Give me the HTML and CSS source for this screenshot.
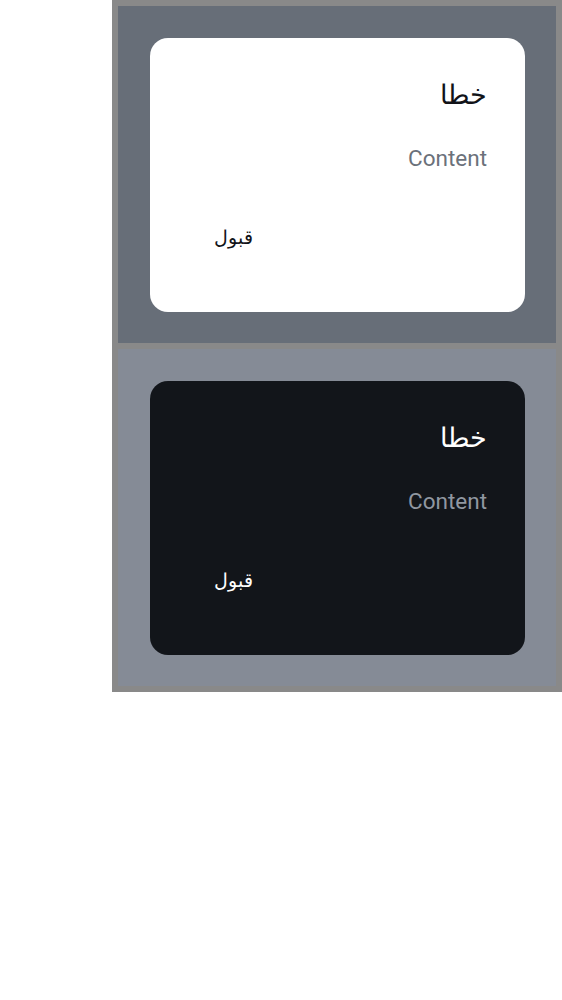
FILE: index.html
```html
<!DOCTYPE html>
<html lang="fa">
<head>
<meta charset="utf-8">
<link rel="stylesheet" href="styles.css">
</head>
<body>
<div class="frame">
  <section class="panel panel-light">
    <div class="dialog dialog-light" dir="rtl">
      <h2 class="dialog-title">خطا</h2>
      <p class="dialog-content">Content</p>
      <div class="dialog-actions"><button class="dialog-btn">قبول</button></div>
    </div>
  </section>
  <section class="panel panel-dark">
    <div class="dialog dialog-dark" dir="rtl">
      <h2 class="dialog-title">خطا</h2>
      <p class="dialog-content">Content</p>
      <div class="dialog-actions"><button class="dialog-btn">قبول</button></div>
    </div>
  </section>
</div>
</body>
</html>
```

FILE: styles.css
```css
html, body {
  margin: 0;
  padding: 0;
  background: #ffffff;
}

body {
  font-family: Roboto, serif;
}

.frame {
  margin-left: 112px;
  width: 450px;
  box-sizing: border-box;
  padding: 6px;
  background: #898989;
  display: flex;
  flex-direction: column;
  gap: 6px;
}

.panel {
  height: 337px;
  box-sizing: border-box;
  padding: 32px 31px 31px 32px;
}

.panel-light { background: #676e78; }
.panel-dark { background: #858b96; }

.dialog {
  height: 274px;
  box-sizing: border-box;
  border-radius: 18px;
  padding: 41px 38px 0 52px;
  display: flex;
  flex-direction: column;
}

.dialog-light { background: #ffffff; color: #111318; }
.dialog-dark { background: #12151a; color: #ffffff; }

.dialog-title {
  margin: 0;
  font-size: 27px;
  font-weight: 400;
  line-height: 32px;
  text-align: right;
}

.dialog-content {
  margin: 34px 0 0;
  font-size: 22.5px;
  line-height: 26px;
  text-align: right;
}

.dialog-light .dialog-content { color: #6b717a; }
.dialog-dark .dialog-content { color: #9097a1; }

.dialog-actions {
  margin-top: 46px;
  display: flex;
  justify-content: flex-end;
}

.dialog-btn {
  font-family: inherit;
  font-size: 19px;
  height: 40px;
  padding: 0 12px;
  border: none;
  background: transparent;
  color: inherit;
  border-radius: 20px;
}
```
